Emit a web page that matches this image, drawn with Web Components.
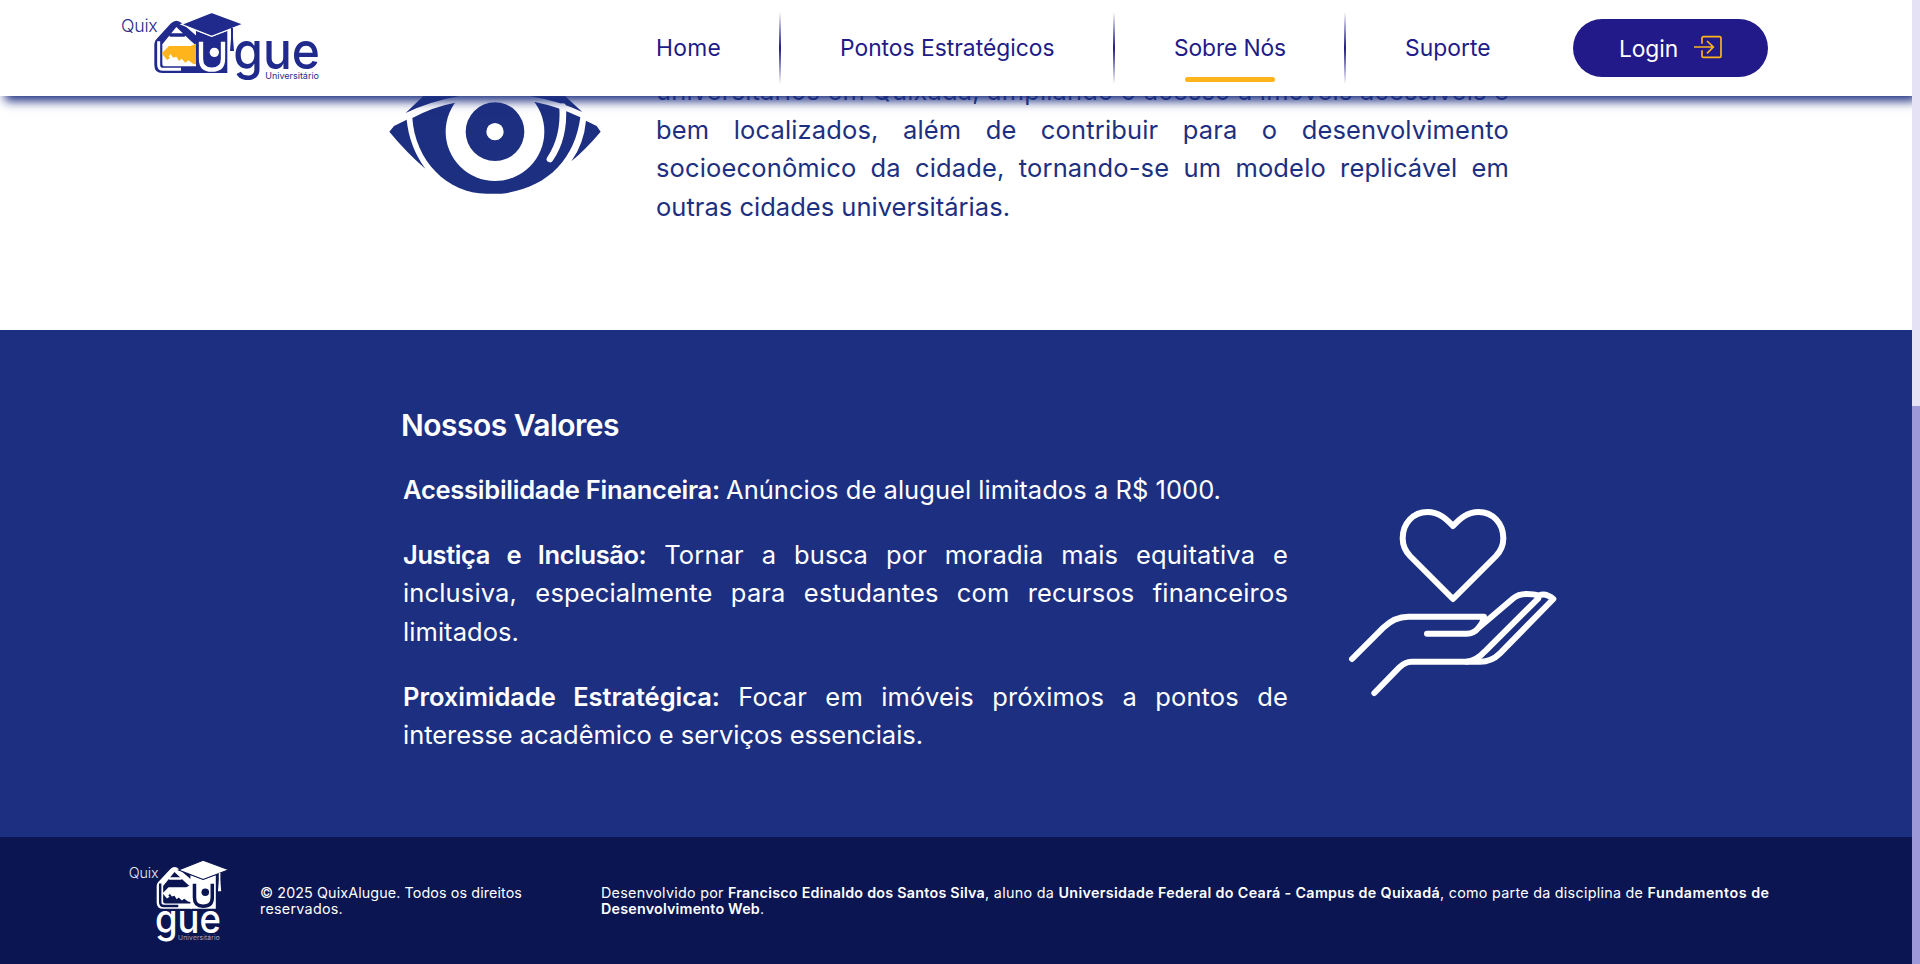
<!DOCTYPE html>
<html lang="pt-BR">
<head>
<meta charset="utf-8">
<title>QuixAlugue</title>
<style>
html,body{margin:0;height:964px;overflow:hidden;background:#fff}
body{font-family:Inter,"Liberation Sans",sans-serif;font-weight:390}
</style>
</head>
<body>
<qa-page></qa-page>
<script>
class Base extends HTMLElement{
  constructor(){super();this.attachShadow({mode:'open'}).innerHTML=this.constructor.html}
}
const def=(name,html,base=Base)=>customElements.define(name,class extends base{static html=html});

/* Text run whose tracking is adjusted to fill a given width */
class Fit extends Base{
  connectedCallback(){
    const s=this.shadowRoot.querySelector('span');
    const w=parseFloat(this.getAttribute('w'));
    const n=[...this.textContent].length;
    if(w&&n)s.style.letterSpacing=((w-s.getBoundingClientRect().width)/n).toFixed(4)+'px';
  }
}
def('fit-text','<style>:host{display:inline}span{white-space:pre;letter-spacing:0}</style><span><slot></slot></span>',Fit);

const mark=`<g>
<path d="M163 132Q163 124 169 118L213 70Q229 54 246 70L294 112V219H187Q163 219 163 195Z" fill="var(--ink)"/>
<path d="M187 133L229 81L272 122L290 138V199H194Q187 199 187 191Z" fill="var(--paper)"/>
<path d="M176 124V194Q176 208 190 208H243" fill="none" stroke="var(--paper)" stroke-width="9"/>
<path d="M212 105H252" stroke="var(--ink)" stroke-width="10" stroke-linecap="round"/>
<path d="M185 160L207 138H272L292 129V194L279 191L265 181L256 188L245 176L237 183L229 170L219 173L212 162L206 170L211 174L201 180Z" fill="var(--key)"/>
<path d="M288 92L335 110L382 92V219H288Z" fill="var(--ink)"/>
<path d="M303 125V176Q303 209 335 209Q369 209 369 176V125" fill="none" stroke="var(--paper)" stroke-width="13"/>
<circle cx="343" cy="157" r="14" fill="var(--paper)"/>
<path d="M244 73L335 37L430 72L335 109Z" fill="var(--ink)" stroke="var(--paper)" stroke-width="4"/>
<path d="M396 84V118" stroke="var(--ink)" stroke-width="6"/>
<path d="M393 115H399L402 153H390Z" fill="var(--ink)"/></g>`;

def('qa-logo',`<style>:host{display:block;--ink:#1f2a8c;--paper:#fff;--key:#ffb41c}svg{display:block}text{fill:var(--ink);font-family:Inter,sans-serif}</style>
<svg width="240" height="96" viewBox="0 0 720 288">${mark}
<text x="63" y="97" font-size="53" font-weight="360" textLength="110">Quix</text>
<text x="400" y="208" font-size="156" font-weight="530" textLength="260" lengthAdjust="spacingAndGlyphs">gue</text>
<text x="496" y="236" font-size="27" font-weight="400" textLength="161">Universitário</text></svg>`);

def('qa-logo-light',`<style>:host{display:block;--ink:#fff;--paper:#0a1551;--key:#fff}svg{display:block}text{fill:#fff;font-family:Inter,sans-serif}</style>
<svg width="150" height="120" viewBox="0 0 450 360"><g transform="translate(8 31.4) scale(.81 .8)">${mark}</g>
<text x="56" y="115" font-size="43" font-weight="320" textLength="90" opacity=".9">Quix</text>
<text x="135" y="280" font-size="117" font-weight="520" textLength="198" lengthAdjust="spacingAndGlyphs">gue</text>
<text x="204" y="301" font-size="20" font-weight="300" textLength="125" opacity=".75">Universitário</text></svg>`);

def('nav-item',`<style>:host{position:relative;display:block;width:var(--w);line-height:32px;font-size:22.8px}
i{display:none;position:absolute;left:50%;top:45px;width:90px;height:5px;margin-left:-45px;border-radius:3px;background:#ffb41c}
:host([active]) i{display:block}</style><slot></slot><i></i>`);
def('nav-rule',`<style>:host{display:block;width:2px;height:72px;margin:0 59px;background:linear-gradient(transparent,#211a88,transparent)}</style>`);
def('login-button',`<style>:host{box-sizing:border-box;display:flex;align-items:center;gap:16px;width:195px;height:58px;margin-left:83px;padding-left:46px;border-radius:29px;background:#211a88;color:#fff;font-size:22.8px}svg{display:block;margin-top:-2px}</style>
<fit-text w="59">Login</fit-text>
<svg width="28" height="24" viewBox="0 0 84 72" fill="none" stroke="#ffb41c" stroke-width="5"><path d="M24 26V10Q24 5 29 5H76Q81 5 81 10V62Q81 67 76 67H29Q24 67 24 62V46M0 36H57M39 18L58 36L39 55"/></svg>`);

def('qa-header',`<style>:host{box-sizing:border-box;position:absolute;left:0;top:0;z-index:2;width:1912px;height:96px;display:flex;align-items:center;padding-left:100px;background:#fff;color:#211a88;box-shadow:5px 5px 10px #1d2f80}
nav{display:flex;align-items:center;margin-left:316px}</style>
<qa-logo></qa-logo>
<nav><nav-item style="--w:64px"><fit-text w="65">Home</fit-text></nav-item><nav-rule></nav-rule>
<nav-item style="--w:214px"><fit-text w="214.5">Pontos Estratégicos</fit-text></nav-item><nav-rule></nav-rule>
<nav-item style="--w:111px" active><fit-text w="112">Sobre Nós</fit-text></nav-item><nav-rule></nav-rule>
<nav-item style="--w:85px"><fit-text w="85.5">Suporte</fit-text></nav-item></nav>
<login-button></login-button>`);

def('text-line',`<style>:host{display:block;height:38.4px;line-height:38.4px;white-space:nowrap}
:host([justify]){white-space:normal;text-align:justify;text-align-last:justify;letter-spacing:.15px}
::slotted(b){font-weight:600;letter-spacing:-.4px}</style><slot></slot>`);

def('eye-icon',`<style>:host{display:block}svg{display:block}</style>
<svg width="250" height="130" viewBox="0 0 750 390" fill="#1d2f80">
<path d="M107 99L160 48H268Q180 64 107 99ZM637 96L585 48H480Q570 64 637 96Z"/>
<path d="M127 114Q190 80 255 68L495 66Q565 80 631 112C614 240 530 325 395 341H350C230 341 135 240 127 114Z"/>
<path d="M58 155L72 138L110 119Q118 200 166 266Q110 218 58 155ZM692 155L680 138L648 122Q642 190 604 244Q650 205 692 155Z"/>
<circle cx="375" cy="155" r="148" fill="#fff"/><circle cx="375" cy="155" r="88"/><circle cx="375" cy="155" r="26" fill="#fff"/>
<path d="M578 80Q584 172 540 237" fill="none" stroke="#fff" stroke-width="20" stroke-linecap="round"/></svg>`);

def('care-icon',`<style>:host{display:block}svg{display:block}</style>
<svg width="240" height="220" viewBox="0 0 720 660" fill="none" stroke="#fff" stroke-width="18" stroke-linecap="round" stroke-linejoin="round">
<path d="M369 108C350 88 328 66 292 66C250 66 218 100 218 145Q218 175 240 198L369 327L498 198Q520 175 520 145C520 100 488 66 446 66C410 66 388 88 369 108Z"/>
<path d="M66 507L160 413Q193 380 235 380H462V384Q457 402 445 414Q432 431 410 431H291M445 414L550 325Q565 312 590 312Q612 312 625 317Q640 311 652 316Q664 320 670 327L510 490Q485 515 450 515H245Q225 515 208 532L133 609"/>
<path d="M625 317V325L465 484Q440 512 410 515"/></svg>`);

def('vision-section',`<style>:host{box-sizing:border-box;display:flex;align-items:flex-start;height:330px;padding:72px 0 0 370px;background:#fff;color:#1d2f80;font-size:25.5px}
eye-icon{margin-top:8px}div{width:853px;margin:.4px 0 0 36px}</style>
<eye-icon></eye-icon><div>
<text-line justify>universitários em Quixadá, ampliando o acesso a imóveis acessíveis e</text-line>
<text-line justify>bem localizados, além de contribuir para o desenvolvimento</text-line>
<text-line justify>socioeconômico da cidade, tornando-se um modelo replicável em</text-line>
<text-line><fit-text w="354">outras cidades universitárias.</fit-text></text-line></div>`);

def('values-section',`<style>:host{box-sizing:border-box;display:flex;align-items:flex-start;height:507px;padding:75px 0 0 401px;background:#1d2f80;color:#fff;font-size:25.5px}
h2{margin:0 0 26px;font-size:30px;line-height:40px;font-weight:600}
section{width:887px}p{margin:0 0 26.3px 2px}care-icon{margin:85px 0 0 42px}b{font-weight:600}text-line{height:38.5px;line-height:38.7px}</style>
<section><h2><fit-text w="218">Nossos Valores</fit-text></h2>
<p><text-line><b><fit-text w="323">Acessibilidade Financeira: </fit-text></b><fit-text w="495">Anúncios de aluguel limitados a R$ 1000.</fit-text></text-line></p>
<p><text-line justify><b>Justiça e Inclusão:</b> Tornar a busca por moradia mais equitativa e</text-line>
<text-line justify>inclusiva, especialmente para estudantes com recursos financeiros</text-line>
<text-line><fit-text w="116">limitados.</fit-text></text-line></p>
<p><text-line justify><b style="letter-spacing:-.05px">Proximidade Estratégica:</b> Focar em imóveis próximos a pontos de</text-line>
<text-line><fit-text w="520">interesse acadêmico e serviços essenciais.</fit-text></text-line></p></section>
<care-icon></care-icon>`);

def('qa-footer',`<style>:host{display:flex;align-items:flex-start;height:127px;padding-left:110px;background:#0a1551;color:#fff;font-size:14.3px;line-height:16px;white-space:nowrap}
qa-logo-light{margin-top:3px}div{margin-top:48px}.c{width:341px}b{font-weight:600}</style>
<qa-logo-light></qa-logo-light>
<div class="c"><fit-text w="262">© 2025 QuixAlugue. Todos os direitos</fit-text><br><fit-text w="83">reservados.</fit-text></div>
<div><fit-text w="127">Desenvolvido por </fit-text><b><fit-text w="257">Francisco Edinaldo dos Santos Silva</fit-text></b><fit-text w="73.5">, aluno da </fit-text><b><fit-text w="381.5">Universidade Federal do Ceará - Campus de Quixadá</fit-text></b><fit-text w="207.5">, como parte da disciplina de </fit-text><b><fit-text w="122">Fundamentos de</fit-text></b><br><b><fit-text w="159">Desenvolvimento Web</fit-text></b>.</div>`);

def('page-scrollbar',`<style>:host{display:flow-root;width:8px;height:964px;background:#e4e2f4}i{display:block;height:558px;margin-top:406px;background:#9d99d8}</style><i></i>`);

def('qa-page',`<style>:host{position:relative;display:flex;width:1920px;height:964px;overflow:hidden}main{width:1912px}page-scrollbar{position:relative;z-index:3}</style>
<qa-header></qa-header><main><vision-section></vision-section><values-section></values-section><qa-footer></qa-footer></main><page-scrollbar></page-scrollbar>`);
</script>
</body>
</html>
